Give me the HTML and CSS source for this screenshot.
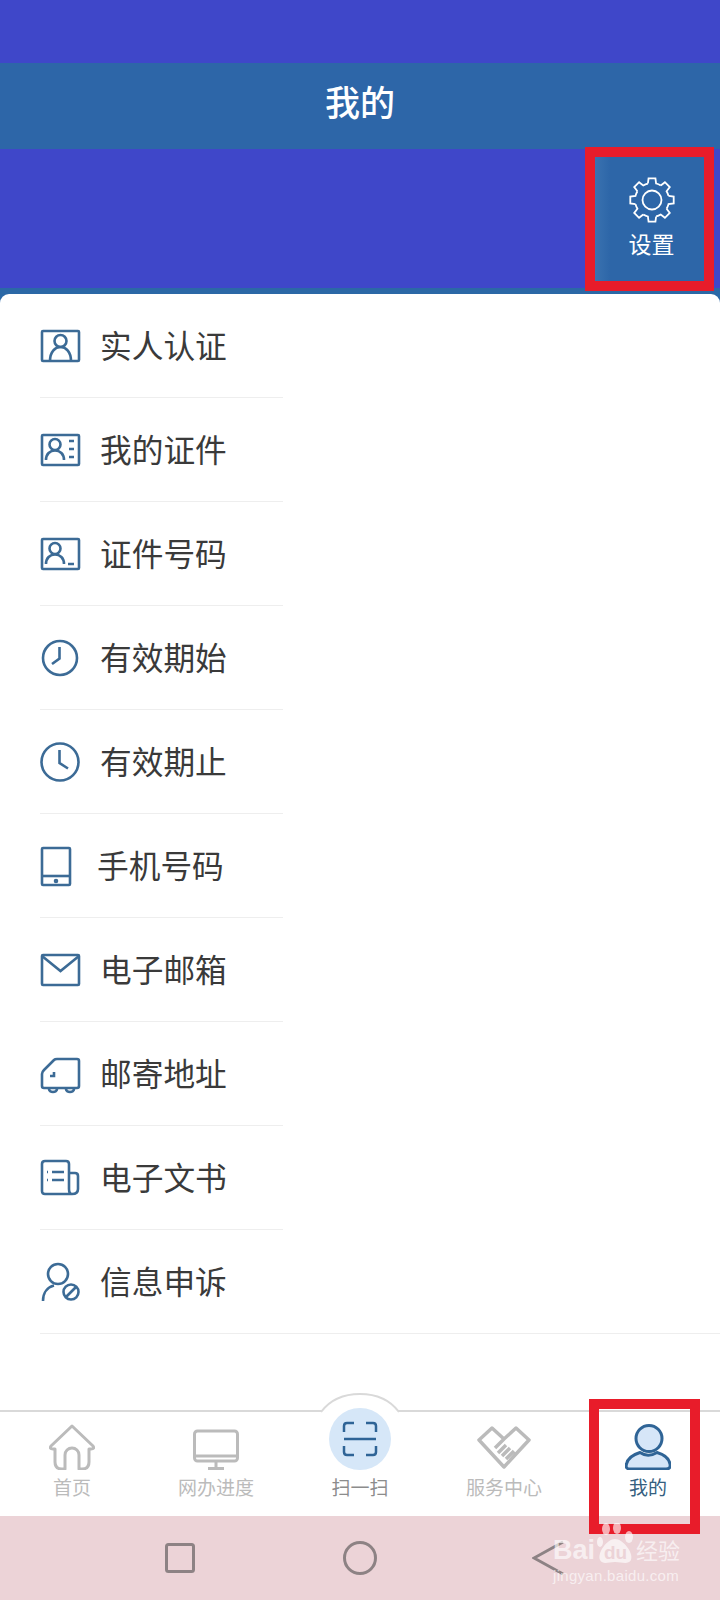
FILE: index.html
```html
<!DOCTYPE html>
<html lang="zh-CN">
<head>
    <meta charset="UTF-8">
    <meta name="viewport" content="width=device-width, initial-scale=1.0">
    <title>我的</title>
    <link rel="stylesheet" href="styles.css">
</head>
<body>
    <div class="page">
        <div class="status-space"></div>
        <header class="title-bar">我的</header>
        <div class="action-zone">
            <div class="settings mark">
                <svg class="gear" viewBox="-23 -23 46 46" width="46" height="46">
                    <defs>
                        <path id="tooth" d="M-4.11 -16.5 L-3.44 -21.7 H3.44 L4.11 -16.5 A17 17 0 0 1 8.76 -14.57"/>
                    </defs>
                    <use href="#tooth"/>
                    <use href="#tooth" transform="rotate(45)"/>
                    <use href="#tooth" transform="rotate(90)"/>
                    <use href="#tooth" transform="rotate(135)"/>
                    <use href="#tooth" transform="rotate(180)"/>
                    <use href="#tooth" transform="rotate(225)"/>
                    <use href="#tooth" transform="rotate(270)"/>
                    <use href="#tooth" transform="rotate(315)"/>
                    <circle r="9.5"/>
                </svg>
                <span>设置</span>
            </div>
        </div>

        <main class="card-wrap">
            <ul class="card">
                <li class="row">
                    <svg class="icon" viewBox="0 0 40 40"><rect x="2" y="5" width="37" height="30" rx="1"/><circle cx="20.5" cy="15" r="6"/><path d="M10 35C10 26 15 21 20.5 21S31 26 31 35"/></svg>
                    <span>实人认证</span>
                </li>
                <li class="row">
                    <svg class="icon" viewBox="0 0 40 40"><rect x="2" y="5" width="37" height="30" rx="1"/><circle cx="15" cy="14.5" r="5.5"/><path d="M6 30C6 24 10 20.5 15 20.5S24 24 24 30M29 11H34M29 19H34M29 27H34"/></svg>
                    <span>我的证件</span>
                </li>
                <li class="row">
                    <svg class="icon" viewBox="0 0 40 40"><rect x="2" y="5" width="37" height="30" rx="1"/><circle cx="15" cy="14.5" r="5.5"/><path d="M6 30C6 24 10 20.5 15 20.5S24 24 24 30M28 30H34"/></svg>
                    <span>证件号码</span>
                </li>
                <li class="row">
                    <svg class="icon" viewBox="0 0 40 40"><circle cx="20" cy="20" r="17"/><path d="M19.500 9V20.500L12 26"/></svg>
                    <span>有效期始</span>
                </li>
                <li class="row">
                    <svg class="icon" viewBox="0 0 40 40"><circle cx="20" cy="20" r="18.500"/><path d="M19.500 8V21L28 26.500"/></svg>
                    <span>有效期止</span>
                </li>
                <li class="row">
                    <svg class="icon icon-narrow" viewBox="0 0 37 40"><rect x="2" y="2" width="28" height="37" rx="1"/><path d="M2 30H30"/><circle class="dot" cx="16" cy="35" r="1"/></svg>
                    <span>手机号码</span>
                </li>
                <li class="row">
                    <svg class="icon" viewBox="0 0 40 40"><rect x="2" y="5" width="37" height="30" rx="1"/><path d="M2 6L20.500 21L39 6"/></svg>
                    <span>电子邮箱</span>
                </li>
                <li class="row">
                    <svg class="icon" viewBox="0 0 40 40"><path d="M7 34H4Q2 34 2 32V20Q2 18 4 16L14 6Q15 5 17 5H37Q39 5 39 7V32Q39 34 37 34H34M7 34H34"/><path d="M9 35A4 3 0 0 0 17 35M26 35A4 3 0 0 0 34 35M10 22H14V18"/></svg>
                    <span>邮寄地址</span>
                </li>
                <li class="row">
                    <svg class="icon" viewBox="0 0 40 40"><path d="M31 36H5Q2 36 2 33V6Q2 3 5 3H26Q29 3 29 6V31Q29 36 32 36Q38 36 38 31V18Q38 15 35 15H29"/><path d="M12 14H24M12 22H24M7 14H8M7 22H8"/></svg>
                    <span>电子文书</span>
                </li>
                <li class="row row-last">
                    <svg class="icon" viewBox="0 0 40 40"><circle cx="18" cy="12" r="10"/><path d="M3 39C3 30 8 25 14 23.500"/><circle cx="31" cy="30" r="7.500"/><path d="M26 35L36 25"/></svg>
                    <span>信息申诉</span>
                </li>
            </ul>
        </main>

        <nav class="tabs">
            <svg class="hump" viewBox="0 0 80 22" width="80" height="22"><path d="M1 20C10 8 24 2 40 2S70 8 79 20"/></svg>
            <div class="tab">
                <svg class="tab-icon" viewBox="0 0 46 46"><path d="M23 2L2 22Q0 25 4 25H6V38Q6 45 13 45H16V31A7 7 0 0 1 30 31V45H33Q40 45 40 38V25H42Q46 25 44 22Z"/></svg>
                <span>首页</span>
            </div>
            <div class="tab">
                <svg class="tab-icon" viewBox="0 0 46 46"><rect x="1.500" y="7" width="43" height="30" rx="3"/><path d="M2 32H44M23 38V44M15 44.500H31"/></svg>
                <span>网办进度</span>
            </div>
            <div class="tab tab-scan">
                <div class="scan-circle">
                    <svg viewBox="0 0 36 36" width="36" height="36"><path d="M12 2H5Q2 2 2 5V11M24 2H31Q34 2 34 5V11M12 34H5Q2 34 2 31V25M24 34H31Q34 34 34 31V25M2 18H34"/></svg>
                </div>
                <span>扫一扫</span>
            </div>
            <div class="tab">
                <svg class="tab-icon tab-icon-service" viewBox="0 0 54 46"><path d="M15 4L27 15L39 4L52 16L27 43L2 16ZM27 15L18 24M25 32L33 24M29 35L37 27M21 29L29 21"/></svg>
                <span>服务中心</span>
            </div>
            <div class="tab tab-active">
                <svg class="tab-icon" viewBox="0 0 46 46"><circle cx="24" cy="14.500" r="13"/><path d="M5 45Q0 45 1.500 40C3 33 10 30 15 28.500Q23 34 32 28.500C37 30 44 33 45 40Q46 45 41 45Z"/></svg>
                <span>我的</span>
            </div>
            <div class="tab-mark"></div>
        </nav>

        <footer class="sys-bar">
            <svg viewBox="0 0 30 30" width="30" height="30" class="sys-square"><rect x="1.500" y="1.500" width="27" height="27" rx="2"/></svg>
            <svg viewBox="0 0 34 34" width="34" height="34" class="sys-circle"><circle cx="17" cy="17" r="15.500"/></svg>
            <svg viewBox="0 0 32 36" width="32" height="36" class="sys-back"><path d="M31 2L2 18L31 34"/></svg>
            <div class="watermark">
                <div class="wm-top">
                    <span class="wm-bai">Bai</span>
                    <span class="wm-paw">
                        <svg viewBox="0 0 38 42" width="38" height="42"><ellipse cx="9" cy="6" rx="4" ry="6"/><ellipse cx="20" cy="5" rx="4" ry="6"/><ellipse cx="32" cy="14" rx="4" ry="6"/><ellipse cx="3" cy="19" rx="3" ry="5"/><path d="M18 16C26 16 37 30 34 37C31 42 25 39 18 39S6 42 3 37C0 30 10 16 18 16Z"/></svg>
                        <span class="wm-du">du</span>
                    </span>
                    <span class="wm-cn">经验</span>
                </div>
                <div class="wm-url">jingyan.baidu.com</div>
            </div>
        </footer>
    </div>
</body>
</html>
```

FILE: styles.css
```css
* {
    box-sizing: border-box;
}
html, body {
    margin: 0;
    padding: 0;
}
body {
    font-family: "Noto Sans CJK SC", "Noto Sans", sans-serif;
    background-color: #fff;
}
.page {
    width: 720px;
    height: 1600px;
    display: flex;
    flex-direction: column;
    overflow: hidden;
    position: relative;
}
.status-space {
    height: 63px;
    background-color: #3f47c9;
}
.title-bar {
    height: 86px;
    background-color: #2d66a8;
    color: #fff;
    font-size: 35px;
    font-weight: 500;
    line-height: 76px;
    text-align: center;
}
.action-zone {
    height: 139px;
    background-color: #3f47c9;
    display: flex;
    justify-content: flex-end;
    align-items: flex-start;
    padding-right: 6px;
}
.mark {
    border: 10px solid #e81c2a;
}
.settings {
    width: 129px;
    height: 144px;
    margin-top: -2px;
    padding: 20px 0 0 4px;
    flex-shrink: 0;
    position: relative;
    z-index: 1;
    background: linear-gradient(to right, #3a72b0, #2d66a8 14%);
    color: #fff;
    display: flex;
    flex-direction: column;
    align-items: center;
    gap: 5px;
    font-size: 23px;
    line-height: 30px;
}
.gear {
    fill: none;
    stroke: #fff;
    stroke-width: 1.8;
}
.card-wrap {
    flex: 1;
    padding-top: 6px;
    background-color: #2b68a6;
}
.card {
    list-style: none;
    margin: 0;
    padding: 0;
    height: 100%;
    background-color: #fff;
    border-radius: 9px 9px 0 0;
}
.row {
    height: 104px;
    margin-left: 40px;
    width: 243px;
    display: flex;
    align-items: center;
    gap: 20px;
    border-bottom: 1px solid #eeeeee;
    font-size: 31.7px;
    color: #3a3a3a;
}
.row span {
    padding-bottom: 3px;
}
.row-last {
    width: 680px;
}
.icon {
    width: 40px;
    height: 40px;
    flex-shrink: 0;
    overflow: visible;
    fill: none;
    stroke: #3c6b96;
    stroke-width: 2.6;
}
.icon-narrow {
    width: 37px;
}
.icon .dot {
    fill: #3c6b96;
}

.tabs {
    height: 106px;
    flex-shrink: 0;
    position: relative;
    display: grid;
    grid-template-columns: repeat(5, 1fr);
    background-color: #fff;
    border-top: 2px solid #d9d9d9;
    padding-top: 12px;
}
.hump {
    position: absolute;
    left: 320px;
    top: -20px;
    fill: #fff;
    stroke: #d9d9d9;
    stroke-width: 2;
}
.tab {
    display: flex;
    flex-direction: column;
    align-items: center;
    gap: 5px;
    font-size: 19px;
    line-height: 24px;
    color: #bbbbbb;
    position: relative;
}
.tab-icon {
    width: 46px;
    height: 46px;
    fill: none;
    stroke: #bbbbbb;
    stroke-width: 3;
    stroke-linejoin: round;
}
.tab-icon-service {
    width: 54px;
    stroke-width: 3.5;
}
.tab-scan {
    color: #8c8c8c;
}
.scan-circle {
    width: 62px;
    height: 62px;
    margin-top: -16px;
    border-radius: 50%;
    background-color: #d6e7f8;
    display: flex;
    align-items: center;
    justify-content: center;
}
.scan-circle svg {
    fill: none;
    stroke: #2f6496;
    stroke-width: 2.5;
}
.tab-active {
    color: #35607f;
}
.tab-active .tab-icon {
    fill: #d6e6f8;
    stroke: #2f6496;
}
.tab-mark {
    position: absolute;
    left: 589px;
    top: -13px;
    width: 111px;
    height: 135px;
    border: 10px solid #e81c2a;
    z-index: 2;
}

.sys-bar {
    height: 84px;
    flex-shrink: 0;
    background-color: #ecd3d7;
    position: relative;
    display: flex;
    align-items: center;
    padding-left: 165px;
}
.sys-bar svg {
    flex-shrink: 0;
}
.sys-square rect,
.sys-circle circle,
.sys-back path {
    fill: none;
    stroke: #8d8284;
    stroke-width: 3;
}
.sys-circle {
    margin-left: 148px;
}
.sys-back {
    margin-left: 155px;
}
.watermark {
    position: absolute;
    left: 553px;
    top: 7px;
    width: 130px;
    z-index: 3;
    color: rgba(255, 255, 255, 0.65);
}
.wm-top {
    display: flex;
    align-items: flex-end;
    height: 42px;
}
.wm-bai {
    font-family: "Liberation Sans", sans-serif;
    font-weight: bold;
    font-size: 27px;
    line-height: 30px;
    width: 44px;
}
.wm-paw {
    position: relative;
    width: 38px;
    height: 42px;
}
.wm-paw svg {
    fill: rgba(255, 255, 255, 0.65);
}
.wm-du {
    position: absolute;
    left: 7px;
    bottom: 2px;
    font-family: "Liberation Sans", sans-serif;
    font-weight: bold;
    font-size: 19px;
    line-height: 20px;
    color: #ecd3d7;
}
.wm-cn {
    font-size: 22px;
    line-height: 32px;
    margin-left: 1px;
    white-space: nowrap;
}
.wm-url {
    font-family: "Liberation Sans", sans-serif;
    font-size: 15px;
    line-height: 20px;
    letter-spacing: 0.3px;
    margin-top: 1px;
    white-space: nowrap;
}
```
